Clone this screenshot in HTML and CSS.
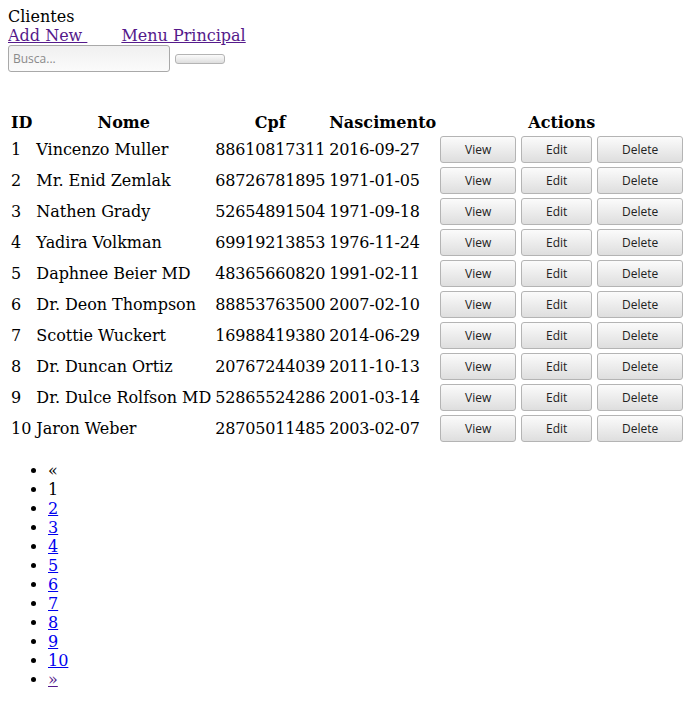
FILE: index.html
```html
<!DOCTYPE html>
<html>
<head>
<meta charset="utf-8">
<title>Clientes</title>
<link rel="stylesheet" href="styles.css">
</head>
<body>
<div class="title">Clientes</div>
<div class="links"><a class="visited" href="#add">Add New </a><span class="gap"></span><a class="visited" href="#menu">Menu Principal</a></div>
<form class="search">
<input class="search-input" type="text" placeholder="Busca..."> <button class="btn btn-empty" type="button"></button>
</form>
<table class="grid">
<thead>
<tr><th>ID</th><th>Nome</th><th>Cpf</th><th class="th-date">Nascimento</th><th>Actions</th></tr>
</thead>
<tbody>
<tr><td>1</td><td class="name">Vincenzo Muller</td><td class="num">88610817311</td><td class="num">2016-09-27</td><td class="actions"><button class="btn">View</button> <button class="btn">Edit</button> <button class="btn">Delete</button></td></tr>
<tr><td>2</td><td class="name">Mr. Enid Zemlak</td><td class="num">68726781895</td><td class="num">1971-01-05</td><td class="actions"><button class="btn">View</button> <button class="btn">Edit</button> <button class="btn">Delete</button></td></tr>
<tr><td>3</td><td class="name">Nathen Grady</td><td class="num">52654891504</td><td class="num">1971-09-18</td><td class="actions"><button class="btn">View</button> <button class="btn">Edit</button> <button class="btn">Delete</button></td></tr>
<tr><td>4</td><td class="name">Yadira Volkman</td><td class="num">69919213853</td><td class="num">1976-11-24</td><td class="actions"><button class="btn">View</button> <button class="btn">Edit</button> <button class="btn">Delete</button></td></tr>
<tr><td>5</td><td class="name">Daphnee Beier MD</td><td class="num">48365660820</td><td class="num">1991-02-11</td><td class="actions"><button class="btn">View</button> <button class="btn">Edit</button> <button class="btn">Delete</button></td></tr>
<tr><td>6</td><td class="name">Dr. Deon Thompson</td><td class="num">88853763500</td><td class="num">2007-02-10</td><td class="actions"><button class="btn">View</button> <button class="btn">Edit</button> <button class="btn">Delete</button></td></tr>
<tr><td>7</td><td class="name">Scottie Wuckert</td><td class="num">16988419380</td><td class="num">2014-06-29</td><td class="actions"><button class="btn">View</button> <button class="btn">Edit</button> <button class="btn">Delete</button></td></tr>
<tr><td>8</td><td class="name">Dr. Duncan Ortiz</td><td class="num">20767244039</td><td class="num">2011-10-13</td><td class="actions"><button class="btn">View</button> <button class="btn">Edit</button> <button class="btn">Delete</button></td></tr>
<tr><td>9</td><td class="name">Dr. Dulce Rolfson MD</td><td class="num">52865524286</td><td class="num">2001-03-14</td><td class="actions"><button class="btn">View</button> <button class="btn">Edit</button> <button class="btn">Delete</button></td></tr>
<tr><td>10</td><td class="name">Jaron Weber</td><td class="num">28705011485</td><td class="num">2003-02-07</td><td class="actions"><button class="btn">View</button> <button class="btn">Edit</button> <button class="btn">Delete</button></td></tr>
</tbody>
</table>
<ul class="pagination">
<li>«</li>
<li>1</li>
<li><a href="#p2">2</a></li>
<li><a href="#p3">3</a></li>
<li><a href="#p4">4</a></li>
<li><a href="#p5">5</a></li>
<li><a href="#p6">6</a></li>
<li><a href="#p7">7</a></li>
<li><a href="#p8">8</a></li>
<li><a href="#p9">9</a></li>
<li><a href="#p10">10</a></li>
<li><a class="visited" href="#next">»</a></li>
</ul>
</body>
</html>
```

FILE: styles.css
```css
body {
  margin: 7px 8px 8px 8px;
  font-family: "DejaVu Serif", serif;
  font-size: 16px;
  color: #000;
}
a {
  color: #0000ee;
}
a.visited {
  color: #551a8b;
}
.links .gap {
  display: inline-block;
  width: 34px;
}
.search {
  margin: 0 0 38px 0;
}
.search-input {
  width: 162px;
  height: 27px;
  box-sizing: border-box;
  padding: 4px;
  border: 1px solid #a9a9a9;
  border-radius: 3px;
  background: linear-gradient(#f0f0f0, #fbfbfb);
  font-family: "Open Sans", sans-serif;
  font-size: 12px;
  color: #222;
  vertical-align: baseline;
}
.search-input::placeholder {
  color: #8a8a8a;
}
.btn {
  font-family: "Open Sans", sans-serif;
  font-size: 12px;
  color: #222;
  padding: 4px 23.8px;
  margin: 0;
  border: 1px solid #b4b4b4;
  border-radius: 3px;
  background: linear-gradient(#fbfbfb, #dedede);
  line-height: 17px;
}
.btn-empty {
  height: 10px;
  width: 50px;
  padding: 0;
}
.grid th, .grid td {
  padding: 1px;
}
.grid td {
  text-align: left;
}
.grid td.num {
  letter-spacing: -0.18px;
}
.grid td.name {
  letter-spacing: -0.05px;
}
.grid th.th-date {
  letter-spacing: 0.05px;
}
.grid td.actions {
  white-space: nowrap;
}
.pagination {
  margin: 16px 0;
  padding-left: 40px;
}
```
